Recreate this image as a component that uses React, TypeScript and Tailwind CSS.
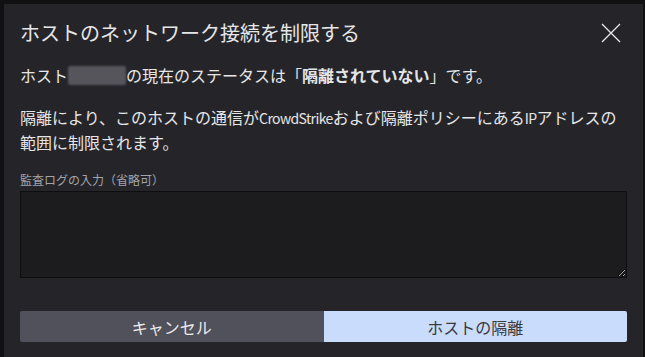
import React from "react";

export default function App() {
  const font = { fontFamily: '"Noto Sans CJK JP", "Noto Sans", sans-serif' };
  return (
    <div className="w-[645px] h-[357px] bg-[#111113] pl-[4px] pt-[4px] pr-[2px] overflow-hidden" style={font}>
      <div className="h-full bg-[#252529] px-[16px] flex flex-col">
        <div className="mt-[15px] flex items-center justify-between h-[28px]">
          <div className="text-[20px] leading-[28px] text-[#e6e6e8]">ホストのネットワーク接続を制限する</div>
          <svg width="20" height="20" viewBox="0 0 20 20" className="mr-[6px]">
            <path d="M1 1 L19 19 M19 1 L1 19" stroke="#e8e8ea" strokeWidth="1.3" fill="none" />
          </svg>
        </div>
        <div className="mt-[16px] text-[16px] leading-[24px] text-[#e6e6e8] whitespace-nowrap flex items-center">
          <span>ホスト</span>
          <span className="inline-block w-[58px] h-[19px] bg-[#55555b] blur-[1px] rounded-[2px]" />
          <span>の現在のステータスは<span className="tracking-[-4px]">「</span><span className="pl-[4px] font-bold">隔離されていない</span>」です。</span>
        </div>
        <div className="mt-[18px] text-[16px] leading-[24px] text-[#e6e6e8] whitespace-nowrap">
          隔離により、このホストの通信が<span className="text-[14px] tracking-[-0.6px]">CrowdStrike</span>および隔離ポリシーにある<span className="text-[14px] tracking-[-0.6px]">IP</span>アドレスの
          <br />
          範囲に制限されます。
        </div>
        <div className="mt-[18px] text-[12px] leading-[16px] text-[#a3a3aa]">監査ログの入力（省略可）</div>
        <textarea className="mt-[3px] h-[87px] w-full bg-[#1c1c1f] border border-[#0e0e10] text-[#e6e6e8] outline-none block" />
        <div className="mt-[33px] flex h-[31px] rounded-[2px] overflow-hidden text-[16px]">
          <button className="flex-1 bg-[#51515c] text-[#ececee] flex items-center justify-center">キャンセル</button>
          <button className="flex-1 bg-[#cadcfc] text-[#3a3a40] flex items-center justify-center">ホストの隔離</button>
        </div>
      </div>
    </div>
  );
}
